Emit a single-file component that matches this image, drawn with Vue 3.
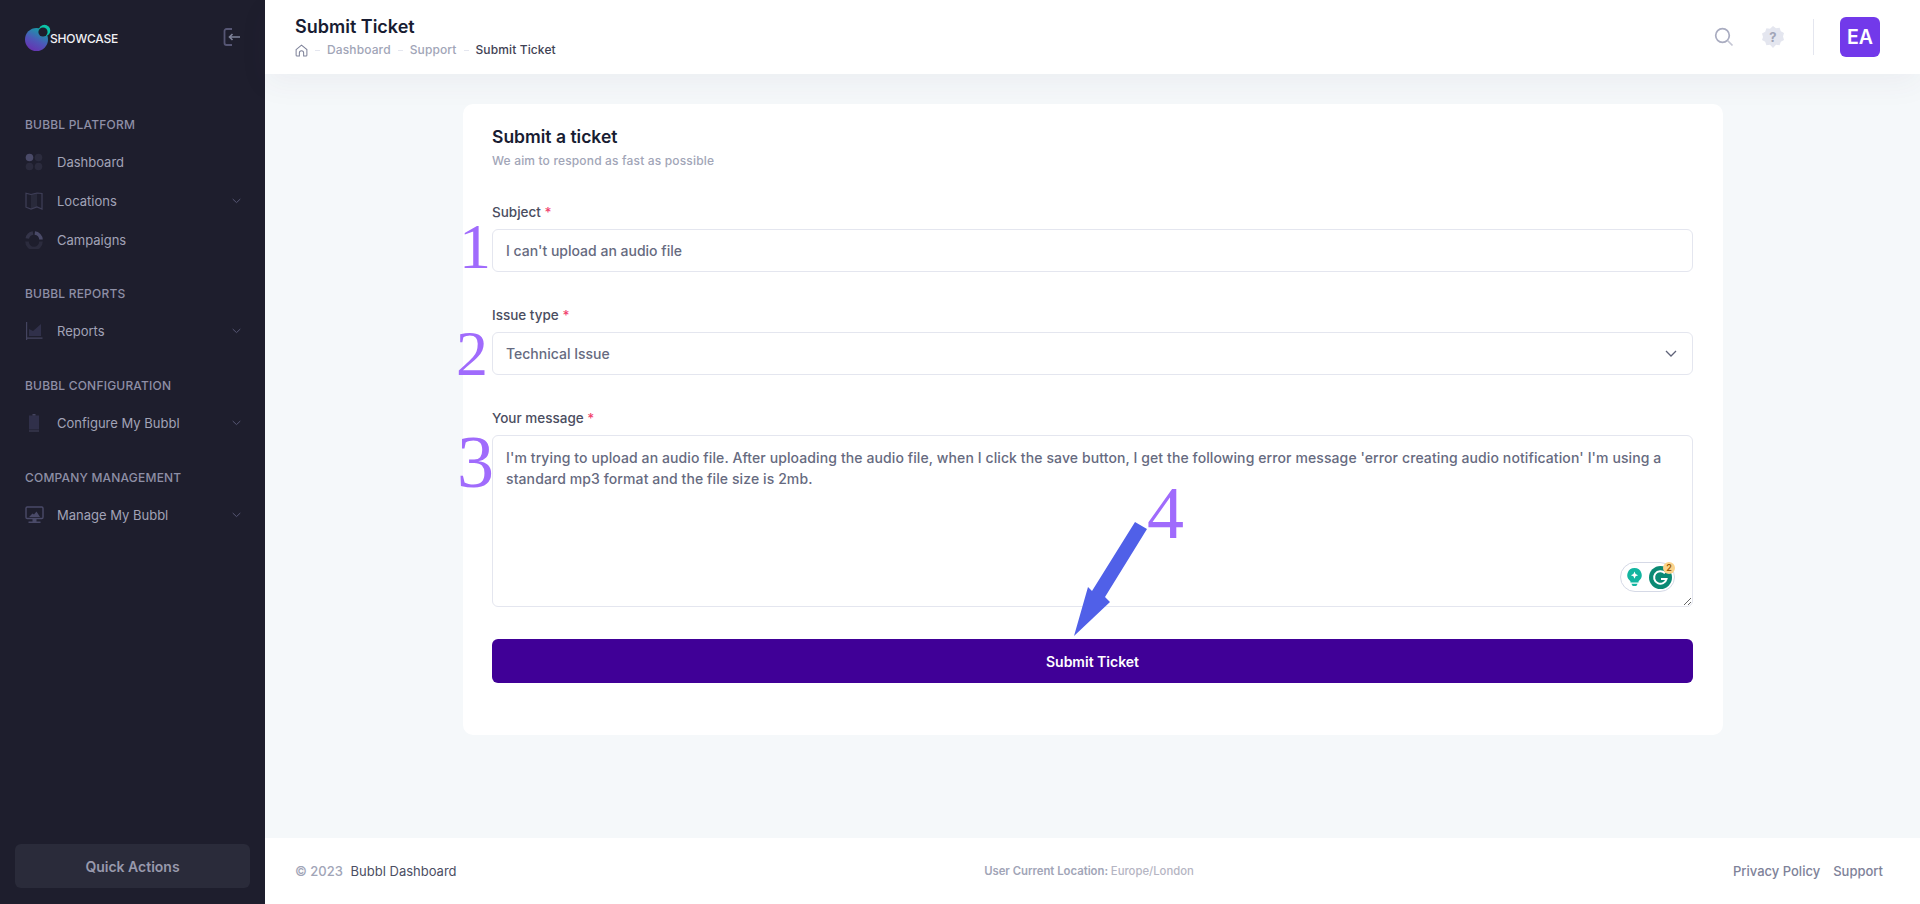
<template>
  <div class="page">
    <aside class="sidebar">
      <div class="brand">
        <svg class="logo" width="28" height="28" viewBox="0 0 28 28">
          <defs>
            <linearGradient id="logoGrad" x1="0.75" y1="0" x2="0.25" y2="1">
              <stop offset="0" stop-color="#10a6a6" />
              <stop offset="0.55" stop-color="#4d57b8" />
              <stop offset="1" stop-color="#6a2fb0" />
            </linearGradient>
          </defs>
          <circle cx="11.5" cy="15.5" r="11.5" fill="url(#logoGrad)" />
          <circle cx="19.5" cy="6.5" r="5.8" fill="#0cc4a8" />
          <circle cx="18" cy="8" r="4.6" fill="#1e1e2d" />
        </svg>
        <span class="brand-name">SHOWCASE</span>
        <svg class="collapse" width="18" height="18" viewBox="0 0 18 18" fill="none">
          <path d="M9 1H3.500a2 2 0 0 0-2 2v12a2 2 0 0 0 2 2H9" stroke="#565674" stroke-width="1.800" />
          <path d="M17 9H6.500M9.500 6 6.500 9l3 3" stroke="#7e8299" stroke-width="1.600" />
        </svg>
      </div>

      <nav class="nav">
        <section v-for="group in groups" :key="group.title" class="nav-group">
          <h4 class="nav-title">{{ group.title }}</h4>
          <a v-for="item in group.items" :key="item.label" class="nav-item">
            <span class="nav-icon">
              <svg v-if="item.icon === 'grid'" width="18" height="18" viewBox="0 0 18 18">
                <circle cx="4.500" cy="4.500" r="3.800" fill="#4a4a68" />
                <circle cx="13.500" cy="4.500" r="3.800" fill="#2b2b3d" />
                <circle cx="4.500" cy="13.500" r="3.800" fill="#2b2b3d" />
                <circle cx="13.500" cy="13.500" r="3.800" fill="#2b2b3d" />
              </svg>
              <svg v-else-if="item.icon === 'map'" width="18" height="18" viewBox="0 0 18 18">
                <path d="M6 2.500 12 1v14l-6 1.800z" fill="#292a3b" />
                <path d="M6 2.500 1 1.200v14L6 17l6-2 5 2V1.500L12 1z" fill="none" stroke="#3f3f58" stroke-width="1.200" />
              </svg>
              <svg v-else-if="item.icon === 'donut'" width="18" height="18" viewBox="0 0 18 18" fill="none">
                <path d="M16 10.500A7 7 0 0 1 2 10.500" stroke="#2b2b3d" stroke-width="3.600" />
                <path d="M2.300 7.500A7 7 0 0 1 8 2" stroke="#343449" stroke-width="3.600" />
                <path d="M9.800 2A7 7 0 0 1 16 8.500" stroke="#4a4a68" stroke-width="3.600" />
              </svg>
              <svg v-else-if="item.icon === 'chart'" width="18" height="18" viewBox="0 0 18 18">
                <path d="M4 14V7l4 2 8-7v12z" fill="#30304a" />
                <path d="M1 0h1.200v15.500H17.500V16.700H2.200V18H1z" fill="#44445f" />
              </svg>
              <svg v-else-if="item.icon === 'phone'" width="18" height="18" viewBox="0 0 18 18">
                <path d="M4 1.500h10V15.500H4z" fill="#30304a" />
                <path d="M7.500 0h3v1.500h-3zM4 16.500h10V17.500H4z" fill="#44445f" />
              </svg>
              <svg v-else width="19" height="18" viewBox="0 0 19 18">
                <rect x="1" y="1" width="17" height="11.500" rx="1.200" fill="#1e1e2d" stroke="#4a4a68" stroke-width="1.400" />
                <path d="M4 11l3.500-3.500 1.500 1 2.500-3 3.500 5.500z" fill="#4a4a68" />
                <path d="M7.500 13h4v2.500h-4zM3.500 15.500h12V17h-12z" fill="#4a4a68" />
              </svg>
            </span>
            <span class="nav-label">{{ item.label }}</span>
            <svg v-if="item.children" class="nav-chevron" width="9" height="6" viewBox="0 0 9 6" fill="none">
              <path d="M0.700 1 4.500 4.600 8.300 1" stroke="#565674" stroke-width="1" />
            </svg>
          </a>
        </section>
      </nav>

      <button class="quick">Quick Actions</button>
    </aside>

    <div class="main">
      <header class="topbar">
        <div>
          <h1 class="page-title">Submit Ticket</h1>
          <div class="crumbs">
            <svg width="13" height="13" viewBox="0 0 14 14" fill="none">
              <path d="M1.200 6 7 1.300 12.800 6v6a1 1 0 0 1-1 1H9.300V9.500a2.300 2.300 0 0 0-4.600 0V13H2.200a1 1 0 0 1-1-1z" stroke="#7e8299" stroke-width="1.100" />
            </svg>
            <i class="dash"></i>
            <span>Dashboard</span>
            <i class="dash"></i>
            <span>Support</span>
            <i class="dash"></i>
            <span class="crumb-current">Submit Ticket</span>
          </div>
        </div>
        <div class="top-actions">
          <svg width="20" height="20" viewBox="0 0 20 20" fill="none">
            <circle cx="8.500" cy="8.500" r="6.800" stroke="#a9acc0" stroke-width="1.700" />
            <path d="M13.500 13.500 18.500 18.500" stroke="#c4c6d4" stroke-width="1.700" />
          </svg>
          <svg class="help" width="24" height="24" viewBox="0 0 24 24">
            <path d="M12 1l3 2.200 3.600-.4 1.200 3.400 3.200 1.800-1 3.500 1 3.500-3.200 1.800-1.200 3.400-3.600-.4L12 23l-3-3.200-3.600.4-1.200-3.400L1 15l1-3-1-3.500 3.200-1.800 1.200-3.400 3.600.4z" fill="#e4e6ef" />
            <text x="12" y="16.500" text-anchor="middle" class="help-mark">?</text>
          </svg>
          <span class="divider"></span>
          <div class="avatar">EA</div>
        </div>
      </header>

      <main class="content">
        <form class="card" @submit.prevent>
          <h2 class="card-title">Submit a ticket</h2>
          <p class="card-sub">We aim to respond as fast as possible</p>

          <label class="field first">
            <span class="label">Subject <em>*</em></span>
            <input class="control" readonly value="I can't upload an audio file" />
          </label>

          <label class="field">
            <span class="label">Issue type <em>*</em></span>
            <div class="select-wrap">
              <select class="control select">
                <option>Technical Issue</option>
              </select>
              <svg class="select-arrow" width="12" height="7" viewBox="0 0 12 7" fill="none">
                <path d="M1 1l5 5 5-5" stroke="#5e6278" stroke-width="1.300" />
              </svg>
            </div>
          </label>

          <label class="field">
            <span class="label">Your message <em>*</em></span>
            <div class="area-wrap">
              <textarea class="control area" readonly :value="message"></textarea>
              <div class="grammarly">
                <svg width="15" height="18" viewBox="0 0 16 20">
                  <path d="M8 0a8 8 0 0 1 4.500 14.600V16h-9v-1.400A8 8 0 0 1 8 0z" fill="#12b5a0" />
                  <path d="M4.500 17.500h7L10 20H6z" fill="#12b5a0" />
                  <path d="M8 4l1.200 2.800L12 8l-2.800 1.200L8 12 6.800 9.200 4 8l2.800-1.200z" fill="#fff" />
                </svg>
                <svg class="g-mark" width="23" height="23" viewBox="0 0 23 23" fill="none">
                  <circle cx="11.500" cy="11.500" r="11.500" fill="#0b8a74" />
                  <path d="M16 7.200A6.300 6.300 0 1 0 17.500 13H12" stroke="#fff" stroke-width="2" />
                </svg>
                <span class="g-count">2</span>
              </div>
            </div>
          </label>

          <button class="submit" type="submit">Submit Ticket</button>

          <!-- hand drawn annotations sitting over the form -->
          <span class="note n1">1</span>
          <span class="note n2">2</span>
          <span class="note n3">3</span>
          <span class="note n4">4</span>
          <svg class="arrow" width="80" height="120" viewBox="0 0 80 120">
            <path d="M62 1 74 8 32 76 37 81 1 115 15 66 19 70z" fill="#5060e8" />
          </svg>
        </form>
      </main>

      <footer class="footer">
        <div class="copy"><span>© 2023</span> Bubbl Dashboard</div>
        <div class="where">User Current Location: <span>Europe/London</span></div>
        <div class="links">
          <a>Privacy Policy</a>
          <a>Support</a>
        </div>
      </footer>
    </div>
  </div>
</template>

<script setup>
const groups = [
  {
    title: 'Bubbl Platform',
    items: [
      { label: 'Dashboard', icon: 'grid' },
      { label: 'Locations', icon: 'map', children: true },
      { label: 'Campaigns', icon: 'donut' },
    ],
  },
  { title: 'Bubbl Reports', items: [{ label: 'Reports', icon: 'chart', children: true }] },
  { title: 'Bubbl Configuration', items: [{ label: 'Configure My Bubbl', icon: 'phone', children: true }] },
  { title: 'Company Management', items: [{ label: 'Manage My Bubbl', icon: 'screen', children: true }] },
]

const message = "I'm trying to upload an audio file. After uploading the audio file, when I click the save button, I get the following error message 'error creating audio notification' I'm using a standard mp3 format and the file size is 2mb."
</script>

<style>
html, body { margin: 0; background: #f5f8fa; }
</style>

<style scoped>
.page {
  display: flex;
  height: 904px;
  overflow: hidden;
  font-family: Inter, "Noto Sans", sans-serif;
  color: #181c32;
}

/* sidebar */
.sidebar {
  width: 265px;
  flex-shrink: 0;
  background: #1e1e2d;
  display: flex;
  flex-direction: column;
  padding: 0 15px 16px;
  box-sizing: border-box;
}
.brand {
  display: flex;
  align-items: center;
  height: 76px;
  padding-left: 10px;
  padding-right: 9px;
  margin-bottom: -2px;
}
.logo { margin-right: -3px; margin-top: -1px; }
.brand-name {
  color: #f1f1f4;
  font-size: 12px;
  font-weight: 500;
  letter-spacing: -0.2px;
}
.collapse { margin-left: auto; margin-top: -2px; }
.nav { flex: 1; padding-top: 42px; }
.nav-group { margin-bottom: 27px; }
.nav-group:first-child { margin-bottom: 26px; }
.nav-title {
  margin: 0 0 8px;
  padding: 0 10px;
  font-size: 12px;
  line-height: 18px;
  font-weight: 500;
  letter-spacing: 0.2px;
  text-transform: uppercase;
  color: #8e8fa6;
}
.nav-item {
  display: flex;
  align-items: center;
  height: 39px;
  padding: 0 10px;
}
.nav-icon {
  display: flex;
  width: 32px;
  flex-shrink: 0;
}
.nav-label {
  font-size: 13px;
  font-weight: 400;
  color: #a2a3b7;
}
.nav-chevron { margin-left: auto; margin-right: -1px; }
.quick {
  height: 44px;
  border: 0;
  border-radius: 6px;
  background: #2a2b3a;
  color: #9899ac;
  font: 600 14px Inter, sans-serif;
}

/* main column */
.main {
  flex: 1;
  min-width: 0;
  display: flex;
  flex-direction: column;
}
.topbar {
  height: 74px;
  flex-shrink: 0;
  box-sizing: border-box;
  background: #fff;
  display: flex;
  align-items: center;
  justify-content: space-between;
  padding: 0 40px 0 30px;
  box-shadow: 0 10px 30px rgba(82, 63, 105, 0.05);
  position: relative;
}
.page-title {
  margin: 0;
  font-size: 18px;
  line-height: 22px;
  font-weight: 600;
  color: #181c32;
}
.crumbs {
  display: flex;
  align-items: center;
  gap: 7px;
  margin-top: 4px;
  font-size: 12px;
  line-height: 16px;
  font-weight: 500;
  letter-spacing: 0.12px;
  color: #a1a5b7;
}
.dash {
  width: 5px;
  height: 1px;
  background: #e4e6ef;
}
.crumb-current { color: #3f4254; }
.top-actions {
  display: flex;
  align-items: center;
}
.help { margin-left: 27px; }
.help-mark {
  font: 700 13px Inter, sans-serif;
  fill: #a1a5b7;
}
.divider {
  width: 1px;
  height: 36px;
  background: #e4e6ef;
  margin: 0 26px 0 28px;
}
.avatar {
  width: 40px;
  height: 40px;
  border-radius: 6px;
  background: #7239ea;
  color: #fff;
  font-size: 19.500px;
  font-weight: 600;
  display: flex;
  align-items: center;
  justify-content: center;
}
.content {
  flex: 1;
  display: flex;
  align-items: flex-start;
  padding: 30px 0 0 198px;
}

/* form card */
.card {
  position: relative;
  width: 1260px;
  height: 631px;
  box-sizing: border-box;
  background: #fff;
  border-radius: 10px;
  padding: 22px 30px 0 29px;
}
.card-title {
  margin: 0;
  font-size: 17.500px;
  line-height: 22px;
  font-weight: 600;
  color: #181c32;
}
.card-sub {
  margin: 4px 0 0;
  font-size: 12px;
  line-height: 18px;
  font-weight: 500;
  letter-spacing: 0.16px;
  color: #a1a5b7;
}
.field {
  display: block;
  margin-top: 33px;
}
.field.first { margin-top: 32px; }
.label {
  display: block;
  font-size: 13.500px;
  line-height: 20px;
  font-weight: 500;
  color: #4a4d60;
  margin-bottom: 7px;
}
.label em {
  font-style: normal;
  color: #f1416c;
}
.control {
  display: block;
  width: 100%;
  height: 43px;
  box-sizing: border-box;
  border: 1px solid #e4e6ef;
  border-radius: 6px;
  background: #fff;
  padding: 0 13px;
  font: 500 14px/21px Inter, sans-serif;
  color: #666a80;
  outline: none;
}
.select-wrap, .area-wrap { position: relative; }
.select { appearance: none; }
.select-arrow {
  position: absolute;
  right: 16px;
  top: 18px;
}
.area {
  height: 172px;
  padding: 11px 13px;
  letter-spacing: 0.1px;
  resize: vertical;
}
.grammarly {
  position: absolute;
  right: 18px;
  bottom: 15px;
  width: 55px;
  height: 30px;
  box-sizing: border-box;
  border: 1px solid #d5d9e6;
  border-radius: 15px;
  background: #fff;
  display: flex;
  align-items: center;
  padding-left: 6px;
}
.g-mark { position: absolute; left: 28px; top: 3px; }
.g-count {
  position: absolute;
  right: -1px;
  top: -1px;
  width: 12px;
  height: 12px;
  border-radius: 50%;
  background: #fcd48b;
  color: #9a5a00;
  font-size: 9px;
  font-weight: 600;
  line-height: 12px;
  text-align: center;
}
.submit {
  display: block;
  width: 100%;
  height: 44px;
  margin-top: 32px;
  border: 0;
  border-radius: 6px;
  background: #400097;
  color: #fff;
  font: 600 14px Inter, sans-serif;
}
.note {
  position: absolute;
  font-family: "Liberation Serif", serif;
  color: #a06bfc;
  line-height: 1;
}
.n1 { left: -4px; top: 111px; font-size: 64px; }
.n2 { left: -7px; top: 218px; font-size: 64px; }
.n3 { left: -6px; top: 321px; font-size: 74px; }
.n4 { left: 684px; top: 372px; font-size: 74px; }
.arrow {
  position: absolute;
  left: 610px;
  top: 417px;
}

/* footer */
.footer {
  height: 66px;
  flex-shrink: 0;
  background: #fff;
  display: grid;
  grid-template-columns: 1fr auto 1fr;
  align-items: center;
  padding: 0 37px 0 30px;
  font-size: 13px;
  color: #4b4e63;
}
.copy { font-weight: 400; }
.copy span {
  color: #a1a5b7;
  font-weight: 500;
  margin-right: 4px;
}
.where {
  font-size: 11.300px;
  font-weight: 600;
  color: #a1a5b7;
}
.where span { font-weight: 500; color: #b5b5c3; }
.links {
  display: flex;
  justify-content: flex-end;
  gap: 13px;
  font-weight: 500;
  color: #7e8299;
}
</style>
